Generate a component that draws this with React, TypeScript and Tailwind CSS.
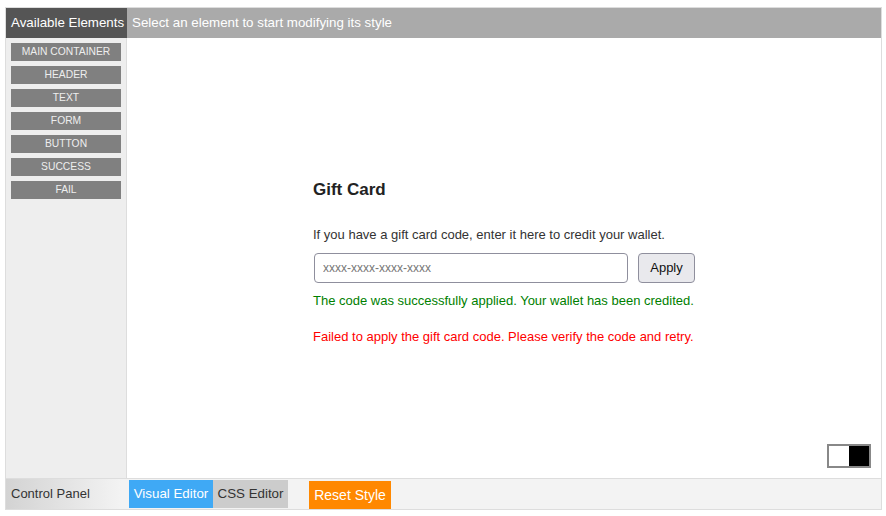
import React from 'react';

const elements = ['MAIN CONTAINER', 'HEADER', 'TEXT', 'FORM', 'BUTTON', 'SUCCESS', 'FAIL'];

export default function App() {
    return (
        <div className="w-[886px] h-[516px] bg-white pt-[7px] pl-[5px] font-['Liberation_Sans',Arial,sans-serif]">
            <div className="w-[877px] h-[503px] border border-[#ddd] flex flex-col">
                <div className="flex h-[30px] shrink-0">
                    <div className="w-[121px] bg-[#555] text-white text-[13.33px] whitespace-nowrap flex items-center pl-[5px] border-r border-[#555]">Available Elements</div>
                    <div className="flex-1 bg-[#aaa] text-white text-[13.33px] flex items-center pl-[5px]">Select an element to start modifying its style</div>
                </div>
                <div className="flex h-[440px] shrink-0">
                    <div className="w-[121px] bg-[#eee] border-r border-[#ddd] flex flex-col gap-[5px] pt-[5px] pl-[5px]">
                        {elements.map(e => (
                            <div key={e} className="w-[110px] h-[18px] bg-[#808080] text-[#eee] text-[10.3px] flex items-center justify-center">{e}</div>
                        ))}
                    </div>
                    <div className="flex-1 bg-white relative pt-[142px] pl-[186px]">
                        <div className="w-[390px] text-[#333] text-[13px] leading-[16px]">
                            <h2 className="text-[17px] leading-[20px] font-bold text-[#222]">Gift Card</h2>
                            <p className="mt-[27px]">If you have a gift card code, enter it here to credit your wallet.</p>
                            <div className="flex gap-[10px] mt-[10px] pl-[1px]">
                                <input className="w-[314px] h-[30px] border border-[#8f8f9d] rounded-[4px] pl-[8px] text-[12px] text-[#333] placeholder:text-[#777] outline-none" placeholder="xxxx-xxxx-xxxx-xxxx" />
                                <button className="w-[57px] h-[30px] bg-[#e9e9ed] border border-[#8f8f9d] rounded-[4px] text-[13px] text-[#111]">Apply</button>
                            </div>
                            <p className="text-[#008000] mt-[10px] whitespace-nowrap">The code was successfully applied. Your wallet has been credited.</p>
                            <p className="text-[#ff0000] mt-[20px] whitespace-nowrap">Failed to apply the gift card code. Please verify the code and retry.</p>
                        </div>
                        <div className="absolute right-[10px] bottom-[10px] w-[44px] h-[24px] border-2 border-[#888] flex">
                            <div className="flex-1 bg-white" />
                            <div className="flex-1 bg-black" />
                        </div>
                    </div>
                </div>
                <div className="flex-1 bg-[#f3f3f3] border-t border-[#ddd] flex items-center text-[13px]">
                    <div className="w-[115px] h-full flex items-center pl-[5px] text-[#333] bg-gradient-to-r from-[#d3d3d3] to-[#f3f3f3]">Control Panel</div>
                    <div className="flex ml-[8px] h-[28px] text-[13.33px]">
                        <div className="w-[84px] bg-[#3fa9f5] text-white flex items-center justify-center">Visual Editor</div>
                        <div className="w-[75px] bg-[#ccc] text-[#333] flex items-center justify-center">CSS Editor</div>
                    </div>
                    <div className="ml-[21px] w-[82px] h-[28px] mt-[2px] bg-[#ff8800] text-white flex items-center justify-center text-[14px]">Reset Style</div>
                </div>
            </div>
        </div>
    );
}
